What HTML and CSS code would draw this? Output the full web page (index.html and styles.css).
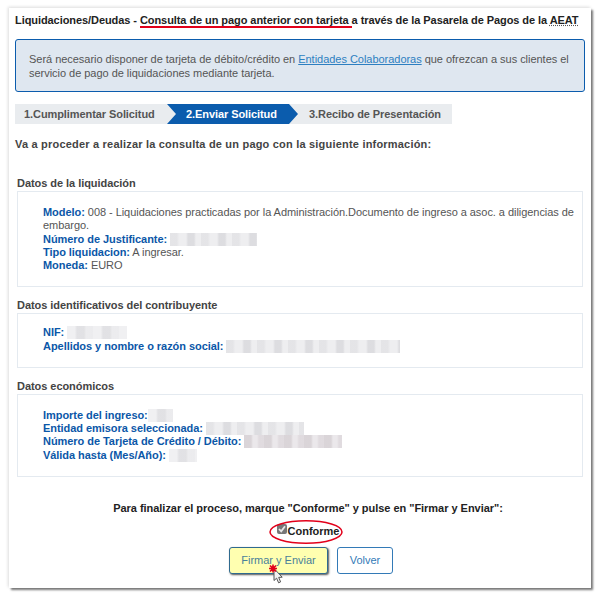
FILE: index.html
```html
<!DOCTYPE html>
<html>
<head>
    <title>Consulta de un pago anterior con tarjeta</title>
    <link rel="stylesheet" href="styles.css">
</head>
<body>
    <div class="window">
        <h1 class="title">Liquidaciones/Deudas - <span class="marked">Consulta de un pago anterior con tarjeta </span>a través de la Pasarela de Pagos de la <abbr>AEAT</abbr></h1>

        <div class="notice">
            Será necesario disponer de tarjeta de débito/crédito en <a href="#">Entidades Colaboradoras</a> que ofrezcan a sus clientes el servicio de pago de liquidaciones mediante tarjeta.
        </div>

        <div class="steps">
            <div class="step first">1.Cumplimentar Solicitud</div>
            <div class="step active">2.Enviar Solicitud</div>
            <div class="step last">3.Recibo de Presentación</div>
        </div>

        <h2 class="lead">Va a proceder a realizar la consulta de un pago con la siguiente información:</h2>

        <div class="section first-section">
            <h3>Datos de la liquidación</h3>
            <div class="box">
                <div class="line"><b>Modelo:</b> 008 - Liquidaciones practicadas por la Administración.Documento de ingreso a asoc. a diligencias de embargo.</div>
                <div class="line"><b>Número de Justificante:</b> <span class="blur blur-a w87"></span></div>
                <div class="line"><b>Tipo liquidacion:</b> A ingresar.</div>
                <div class="line"><b>Moneda:</b> EURO</div>
            </div>
        </div>

        <div class="section">
            <h3>Datos identificativos del contribuyente</h3>
            <div class="box short">
                <div class="line"><b>NIF:</b> <span class="blur blur-b w60"></span></div>
                <div class="line"><b>Apellidos y nombre o razón social:</b> <span class="blur blur-a w174"></span></div>
            </div>
        </div>

        <div class="section">
            <h3>Datos económicos</h3>
            <div class="box">
                <div class="line"><b>Importe del ingreso:</b><span class="blur blur-b w25"></span></div>
                <div class="line"><b>Entidad emisora seleccionada:</b> <span class="blur blur-a w98"></span></div>
                <div class="line"><b>Número de Tarjeta de Crédito / Débito:</b> <span class="blur blur-c w98"></span></div>
                <div class="line"><b>Válida hasta (Mes/Año):</b> <span class="blur blur-b w28"></span></div>
            </div>
        </div>

        <p class="finish">Para finalizar el proceso, marque "Conforme" y pulse en "Firmar y Enviar":</p>

        <div class="agree">
            <label class="agree-label"><span class="check">
                <svg width="10" height="10" viewBox="0 0 10 10"><path d="M2 5 L4.2 7.4 L8 2.2" fill="none" stroke="#e8e8e8" stroke-width="1.8"/></svg>
            </span>Conforme
                <svg class="ellipse" width="76" height="26" viewBox="0 0 76 26"><ellipse cx="38" cy="13" rx="36" ry="11.2" fill="none" stroke="#e2001a" stroke-width="1.5"/></svg>
            </label>
        </div>

        <div class="actions">
            <button class="btn primary">Firmar y Enviar</button>
            <button class="btn">Volver</button>
            <svg class="pointer" width="20" height="26" viewBox="0 0 20 26">
                <path d="M6 4.5 L6 16.5 L8.6 14.2 L10.6 18.8 L12.6 17.9 L10.7 13.4 L14.2 13.2 Z" fill="#f2f2f2" stroke="#555" stroke-width="1"/>
                <path d="M5 0.5 L5 8.5 M1 4.5 L9 4.5 M2 1.5 L8 7.5 M8 1.5 L2 7.5" stroke="#e2001a" stroke-width="1.6" fill="none"/>
            </svg>
        </div>
    </div>
</body>
</html>
```

FILE: styles.css
```css
html, body {
    margin: 0;
    padding: 0;
    background-color: #fff;
}

body {
    font-family: "Liberation Sans", Arial, sans-serif;
    font-size: 11px;
    color: #444;
    height: 597px;
    overflow: hidden;
}

.window {
    box-sizing: border-box;
    width: 582px;
    height: 580px;
    margin: 8px 0 0 9px;
    padding: 6px 6px 0;
    background-color: #fff;
    box-shadow: 2px 2px 2px #777, -1px -1px 3px #ddd;
}

.title {
    margin: 0;
    font-size: 11px;
    line-height: 13px;
    font-weight: bold;
    letter-spacing: -0.07px;
    white-space: nowrap;
    color: #222;
}

.marked {
    border-bottom: 2px solid #e2001a;
}

abbr {
    text-decoration: underline dotted #555;
}

.notice {
    box-sizing: border-box;
    height: 53px;
    margin-top: 12px;
    padding: 12px 13px;
    background-color: #dfe7f0;
    border: 1px solid #0b5cad;
    border-radius: 3px;
    line-height: 14px;
    color: #555;
    letter-spacing: -0.03px;
}

.notice a {
    color: #2d7fc1;
}

.steps {
    display: flex;
    margin-top: 12px;
    height: 20px;
    width: 437px;
    background-color: #e9ecef;
    font-weight: bold;
    line-height: 20px;
    letter-spacing: -0.08px;
}

.step {
    color: #555;
}

.step.first {
    width: 152px;
    padding-left: 9px;
    box-sizing: border-box;
}

.step.active {
    width: 131px;
    box-sizing: border-box;
    padding-left: 19px;
    color: #fff;
    background-color: #0b5cad;
    clip-path: polygon(0 0, 122px 0, 100% 50%, 122px 100%, 0 100%, 9px 50%);
}

.step.last {
    padding-left: 11px;
}

.lead {
    margin: 13px 0 0;
    font-size: 11px;
    line-height: 14px;
    font-weight: bold;
    color: #444;
    letter-spacing: 0.2px;
}

.section {
    margin: 12px 2px 0;
}

.first-section {
    margin-top: 26px;
}

.section h3 {
    margin: 0;
    font-size: 11px;
    line-height: 13px;
    font-weight: bold;
    color: #444;
    letter-spacing: -0.05px;
}

.box {
    margin-top: 1px;
    padding: 14px 4px 14px 25px;
    border: 1px solid #e4eaf0;
    line-height: 13.25px;
    letter-spacing: -0.05px;
    color: #555;
}

.box.short {
    padding-top: 12px;
}

.line b {
    color: #0b57a8;
}

.blur {
    display: inline-block;
    height: 13px;
    vertical-align: -3px;
}

.blur-a {
    background:
        linear-gradient(90deg, rgba(120, 120, 130, 0.08) 0 7px, transparent 9px 16px, rgba(120, 120, 130, 0.14) 18px 24px, transparent 26px 31px) 0 0 / 31px 100%,
        #eeeef0;
}

.blur-b {
    background:
        linear-gradient(90deg, transparent 0 8px, rgba(120, 120, 130, 0.12) 10px 17px, rgba(120, 120, 130, 0.04) 19px 26px) 0 0 / 26px 100%,
        #f0f0f2;
}

.blur-c {
    background:
        linear-gradient(90deg, rgba(130, 110, 120, 0.16) 0 7px, transparent 9px 13px, rgba(130, 110, 120, 0.1) 15px 20px) 0 0 / 20px 100%,
        #ebe8eb;
}

.w25 { width: 25px; }
.w28 { width: 28px; }
.w60 { width: 60px; }
.w87 { width: 87px; }
.w98 { width: 98px; }
.w174 { width: 174px; }

.finish {
    margin: 25px 0 0;
    padding-left: 16px;
    text-align: center;
    font-weight: bold;
    color: #222;
    line-height: 13px;
    letter-spacing: -0.03px;
}

.agree {
    display: flex;
    justify-content: center;
    margin-top: 9px;
    padding-left: 16px;
}

.agree-label {
    position: relative;
    display: flex;
    align-items: center;
    font-size: 11px;
    line-height: 14px;
    font-weight: bold;
    color: #222;
}

.check {
    display: inline-block;
    width: 10px;
    height: 10px;
    background-color: #777;
    border-radius: 2px;
    margin-top: -3px;
    margin-right: 1px;
}

.check svg {
    display: block;
}

.ellipse {
    position: absolute;
    left: -9px;
    top: -5px;
}

.actions {
    position: relative;
    display: flex;
    justify-content: center;
    gap: 9px;
    margin-top: 9px;
    padding-left: 22px;
}

.btn {
    box-sizing: border-box;
    width: 56px;
    height: 27px;
    padding: 0;
    font-family: inherit;
    font-size: 11px;
    color: #337ab7;
    background-color: #fff;
    border: 1px solid #337ab7;
    border-radius: 3px;
}

.btn.primary {
    width: 99px;
    background-color: #ffffb0;
    border-color: #2f6a8f;
    color: #4a7f9a;
    box-shadow: 1px 1px 2px #555;
}

.pointer {
    position: absolute;
    left: 253px;
    top: 17px;
    overflow: visible;
}
```
